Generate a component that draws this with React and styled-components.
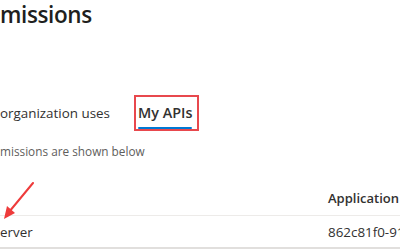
import React from 'react';
import styled, { createGlobalStyle } from 'styled-components';

const Global = createGlobalStyle`
  html, body {
    margin: 0;
    padding: 0;
    background: #fff;
    overflow: hidden;
  }
  body {
    font-family: "Open Sans", "Noto Sans", "Liberation Sans", sans-serif;
    color: #323130;
  }
`;

function App() {
  return (
    <Page>
      <Global />
      <Title>missions</Title>
      <Tabs>
        <Tab>organization uses</Tab>
        <Marked>
          <Tab selected>My APIs</Tab>
        </Marked>
      </Tabs>
      <Description>missions are shown below</Description>
      <Table>
        <HeaderRow>
          <Cell />
          <HeaderCell>Application</HeaderCell>
          <Arrow width="40" height="40" viewBox="0 0 40 40">
            <line x1="33" y1="1" x2="9" y2="30" stroke="#ee3b3b" strokeWidth="2" strokeLinecap="round" />
            <polygon points="4,37 7,24 15,31" fill="#ee3b3b" />
          </Arrow>
        </HeaderRow>
        <Row>
          <Cell>erver</Cell>
          <Cell>862c81f0-91</Cell>
        </Row>
      </Table>
    </Page>
  );
}

export default App;

const Page = styled.div`
  width: 400px;
  height: 250px;
  overflow: hidden;
  position: relative;
`;

const Title = styled.h1`
  margin: 0;
  font-size: 22.5px;
  font-weight: 600;
  line-height: 30px;
  letter-spacing: -0.4px;
  color: #201f1e;
`;

const Tabs = styled.div`
  display: flex;
  align-items: center;
  margin-top: 65px;
  height: 36px;
  gap: 24px;
`;

const Marked = styled.div`
  border: 2px solid #e8484d;
  padding: 0 5px 0 2px;
  height: 32px;
  display: flex;
  align-items: center;
`;

const Tab = styled.div`
  position: relative;
  font-size: ${p => (p.selected ? '14.4px' : '13.4px')};
  font-weight: ${p => (p.selected ? 600 : 400)};
  color: #323130;
  line-height: 20px;
  &::after {
    content: '';
    display: ${p => (p.selected ? 'block' : 'none')};
    position: absolute;
    left: 0;
    right: 0;
    bottom: -6px;
    height: 2px;
    border-radius: 1px;
    background: #0078d4;
  }
`;

const Description = styled.div`
  margin-top: 10px;
  font-size: 11.8px;
  line-height: 20px;
  color: #605e5c;
`;

const Table = styled.div`
  margin-top: 20px;
`;

const HeaderRow = styled.div`
  position: relative;
  display: grid;
  grid-template-columns: 1fr 72px;
  height: 34px;
  align-items: center;
  border-bottom: 1px solid #edebe9;
`;

const HeaderCell = styled.div`
  font-size: 13px;
  font-weight: 600;
  color: #323130;
`;

const Row = styled.div`
  display: grid;
  grid-template-columns: 1fr 72px;
  height: 31px;
  align-items: center;
  border-bottom: 2px solid #e1dfdd;
`;

const Cell = styled.div`
  font-size: 13.4px;
  color: #323130;
  white-space: nowrap;
  overflow: hidden;
`;

const Arrow = styled.svg`
  position: absolute;
  left: 0;
  top: 1px;
`;
